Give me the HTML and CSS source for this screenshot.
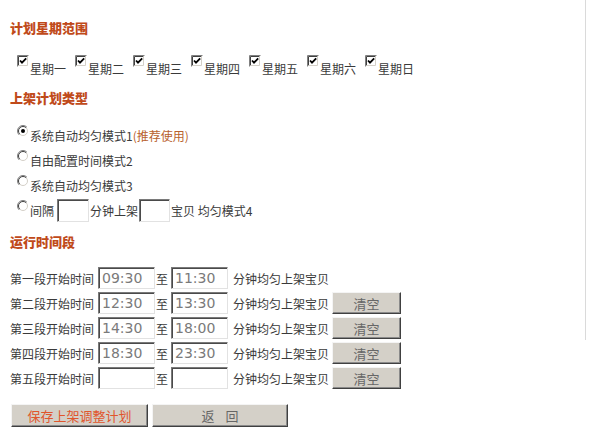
FILE: index.html
```html
<!DOCTYPE html>
<html lang="zh-CN">
<head>
<meta charset="utf-8">
<title>上架计划</title>
<link rel="stylesheet" href="styles.css">
</head>
<body>
<svg class="defs" width="0" height="0" aria-hidden="true">
  <symbol id="cb" viewBox="0 0 12 12">
    <rect x="0" y="0" width="12" height="12" fill="#fff"/>
    <path d="M0.5 11.5V0.5H11.5" stroke="#808080" fill="none"/>
    <path d="M1.5 10.5V1.5H10.5" stroke="#404040" fill="none"/>
    <path d="M1.5 10.5H10.5V1.5" stroke="#d4d0c8" fill="none"/>
    <path d="M3 5.5l2 2.2 4.2-4.4" stroke="#000" stroke-width="1.8" fill="none"/>
  </symbol>
  <symbol id="rb" viewBox="0 0 12 12">
    <circle cx="6" cy="6" r="5" fill="#fff"/>
    <path d="M2.1 9.9A5.5 5.5 0 0 1 9.9 2.1" stroke="#808080" fill="none"/>
    <path d="M2.8 9.2A4.5 4.5 0 0 1 9.2 2.8" stroke="#404040" fill="none"/>
    <path d="M9.2 2.8A4.5 4.5 0 0 1 2.8 9.2" stroke="#d4d0c8" fill="none"/>
  </symbol>
</svg>
<div class="wrap">
  <div class="main">
    <h3 class="title t-days">计划星期范围</h3>
    <div class="days">
      <label class="day"><svg class="cb"><use href="#cb"/></svg><span>星期一</span></label>
      <label class="day"><svg class="cb"><use href="#cb"/></svg><span>星期二</span></label>
      <label class="day"><svg class="cb"><use href="#cb"/></svg><span>星期三</span></label>
      <label class="day"><svg class="cb"><use href="#cb"/></svg><span>星期四</span></label>
      <label class="day"><svg class="cb"><use href="#cb"/></svg><span>星期五</span></label>
      <label class="day"><svg class="cb"><use href="#cb"/></svg><span>星期六</span></label>
      <label class="day"><svg class="cb"><use href="#cb"/></svg><span>星期日</span></label>
    </div>

    <h3 class="title t-mode">上架计划类型</h3>
    <div class="modes">
      <div class="mode"><svg class="rb" viewBox="0 0 12 12"><use href="#rb"/><circle cx="6" cy="6" r="2" fill="#000"/></svg><span>系统自动均匀模式1<em class="hint">(推荐使用)</em></span></div>
      <div class="mode"><svg class="rb"><use href="#rb"/></svg><span>自由配置时间模式2</span></div>
      <div class="mode"><svg class="rb"><use href="#rb"/></svg><span>系统自动均匀模式3</span></div>
      <div class="mode"><svg class="rb"><use href="#rb"/></svg><span>间隔</span><input class="field f-min" type="text"><span class="tight">分钟上架</span><input class="field f-cnt" type="text"><span class="tight">宝贝 均匀模式4</span></div>
    </div>

    <h3 class="title t-time">运行时间段</h3>
    <div class="times">
      <div class="trow"><span class="tlabel">第一段开始时间</span><input class="field tfield" type="text" value="09:30"><span class="to">至</span><input class="field tfield" type="text" value="11:30"><span class="desc">分钟均匀上架宝贝</span></div>
      <div class="trow"><span class="tlabel">第二段开始时间</span><input class="field tfield" type="text" value="12:30"><span class="to">至</span><input class="field tfield" type="text" value="13:30"><span class="desc">分钟均匀上架宝贝</span><button class="btn clear" type="button">清空</button></div>
      <div class="trow"><span class="tlabel">第三段开始时间</span><input class="field tfield" type="text" value="14:30"><span class="to">至</span><input class="field tfield" type="text" value="18:00"><span class="desc">分钟均匀上架宝贝</span><button class="btn clear" type="button">清空</button></div>
      <div class="trow"><span class="tlabel">第四段开始时间</span><input class="field tfield" type="text" value="18:30"><span class="to">至</span><input class="field tfield" type="text" value="23:30"><span class="desc">分钟均匀上架宝贝</span><button class="btn clear" type="button">清空</button></div>
      <div class="trow"><span class="tlabel">第五段开始时间</span><input class="field tfield" type="text" value=""><span class="to">至</span><input class="field tfield" type="text" value=""><span class="desc">分钟均匀上架宝贝</span><button class="btn clear" type="button">清空</button></div>
    </div>

    <div class="actions">
      <button class="btn save" type="button">保存上架调整计划</button>
      <button class="btn back" type="button">返 回</button>
    </div>
  </div>
  <div class="vline"></div>
</div>
</body>
</html>
```

FILE: styles.css
```css
html, body {
  margin: 0;
  padding: 0;
  background: #fff;
}
body {
  font-family: "Noto Sans CJK SC", "Noto Sans", sans-serif;
  font-size: 12px;
  color: #3a3a3a;
}
.defs {
  position: absolute;
  width: 0;
  height: 0;
  overflow: hidden;
}
.wrap {
  display: flex;
  align-items: flex-start;
}
.main {
  width: 585px;
  flex: none;
  box-sizing: border-box;
  padding-left: 10px;
}
.vline {
  width: 1px;
  height: 340px;
  background: #dadada;
  flex: none;
}
.title {
  margin: 0;
  font-size: 13px;
  line-height: 16px;
  font-weight: 900;
  color: #c04a1a;
}
.t-days { margin-top: 20px; }
.t-mode { margin-top: 13px; }
.t-time { margin-top: 11px; }

/* days */
.days {
  display: flex;
  margin-top: 19px;
  padding-left: 7px;
}
.day {
  display: flex;
  align-items: flex-start;
  width: 58px;
}
.cb {
  width: 12px;
  height: 12px;
  flex: none;
}
.day span {
  margin-left: 1px;
  padding-top: 6px;
  line-height: 16px;
}

/* modes */
.modes {
  margin-top: 17px;
  padding-left: 7px;
}
.mode {
  display: flex;
  align-items: center;
  height: 25px;
}
.rb {
  width: 12px;
  height: 12px;
  flex: none;
  margin-bottom: 10px;
  margin-right: 1px;
}
.hint {
  font-style: normal;
  color: #b8622e;
}
.tight { margin: 0 1px; }

.field {
  box-sizing: border-box;
  margin: 0;
  padding: 0 0 0 3px;
  border: 1px solid;
  border-color: #7a7a7a #e2e2e2 #e2e2e2 #7a7a7a;
  box-shadow: inset 1px 1px 0 #4a4a4a;
  background: #fff;
  font-family: "DejaVu Sans", Verdana, sans-serif;
  font-size: 14px;
  color: #7a7a7a;
  outline: none;
}
.f-min {
  width: 32px;
  height: 23px;
  margin-left: 3px;
}
.f-cnt {
  width: 31px;
  height: 23px;
}

/* time rows */
.times {
  margin-top: 17px;
}
.trow {
  display: flex;
  align-items: center;
  height: 22px;
  margin-bottom: 3px;
}
.tlabel {
  width: 84px;
  flex: none;
}
.tfield {
  width: 57px;
  height: 22px;
  margin-left: 4px;
}
.to {
  margin-left: 1px;
  margin-right: -1px;
}
.desc {
  margin-left: 5px;
  width: 96px;
}
.btn {
  box-sizing: border-box;
  margin: 0;
  padding: 0;
  background: #d4d0c8;
  border: 1px solid;
  border-color: #f4f4f4 #404040 #404040 #f4f4f4;
  box-shadow: inset -1px -1px 0 #8a8a8a;
  font-family: "Noto Sans CJK SC", sans-serif;
  font-size: 13px;
  color: #666;
  cursor: pointer;
}
.clear {
  width: 69px;
  height: 22px;
  margin-left: 3px;
}

/* actions */
.actions {
  display: flex;
  margin-top: 15px;
}
.save {
  width: 137px;
  height: 23px;
  margin-left: 1px;
  color: #e0552c;
}
.back {
  width: 136px;
  height: 23px;
  margin-left: 4px;
  word-spacing: 8px;
}
```
